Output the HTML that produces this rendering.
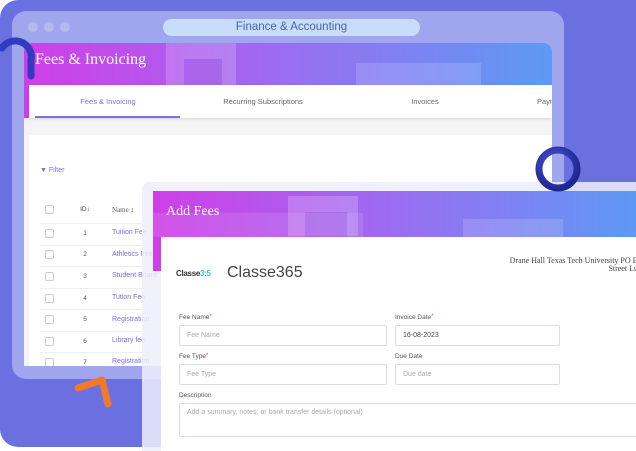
<!DOCTYPE html><html><head><style>
*{margin:0;padding:0;box-sizing:border-box}
html,body{width:636px;height:451px;overflow:hidden}
body{background:#fff;font-family:"Liberation Sans",sans-serif;position:relative}
.a{position:absolute}
.t{font-size:7.5px;color:#666}
.in{position:absolute;border:1px solid #dcdce4;border-radius:2px;background:#fff;font-size:7px;color:#aaa;padding:0 7px;display:flex;align-items:center}
.lbl{position:absolute;font-size:6.5px;color:#555}
.lbl b{color:#e33;font-weight:normal;font-size:6px;vertical-align:top}
.cb{position:absolute;left:45px;width:9px;height:9px;border:1px solid #ccc;border-radius:2px}
.row{position:absolute;left:40px;width:110px;border-top:1px solid #eee}
.id{position:absolute;left:80px;width:10px;text-align:center;font-size:6.5px;color:#555}
.nm{position:absolute;left:112px;font-size:7px;color:#7a6fe0;white-space:nowrap}
</style></head><body>
<div class="a" style="left:0;top:0;width:660px;height:447px;background:#6a70e0;border-radius:18px 0 0 18px"></div>
<div class="a" style="left:12px;top:11px;width:552px;height:368px;background:#a0a6ee;border-radius:14px"></div>
<div class="a" style="left:28px;top:22px;width:10px;height:10px;border-radius:50%;background:#b4b8ec"></div>
<div class="a" style="left:44px;top:22px;width:10px;height:10px;border-radius:50%;background:#b4b8ec"></div>
<div class="a" style="left:60px;top:22px;width:10px;height:10px;border-radius:50%;background:#b4b8ec"></div>
<div class="a" style="left:163px;top:19px;width:257px;height:17px;border-radius:9px;background:#c9dcfb;font-size:11.5px;color:#45699c;text-align:center;line-height:17px">Finance &amp; Accounting</div>
<div class="a" style="left:24px;top:43px;width:528px;height:323px;background:#f4f4f6;border-radius:8px 8px 0 0;overflow:hidden">
 <div class="a" style="left:0;top:0;width:528px;height:75px;background:linear-gradient(90deg,#d03ee8,#9a6ef0 50%,#5c9af5)"></div>
 <div class="a" style="left:142px;top:0;width:70px;height:42px;background:rgba(255,255,255,.18)"></div>
 <div class="a" style="left:160px;top:16px;width:38px;height:26px;background:rgba(120,40,220,.25)"></div>
 <div class="a" style="left:332px;top:20px;width:125px;height:55px;background:rgba(255,255,255,.15)"></div>
 <div class="a" style="left:11px;top:8px;font-family:'Liberation Serif',serif;font-size:16px;color:#fff">Fees &amp; Invoicing</div>
 <div class="a" style="left:5px;top:42px;width:523px;height:33px;background:#fff;box-shadow:0 1px 3px rgba(0,0,0,.12)">
  <div class="a t" style="left:6px;top:12px;width:146px;text-align:center;color:#7b6fe0">Fees &amp; Invoicing</div>
  <div class="a" style="left:6px;top:31px;width:145px;height:2px;background:#7b6fe0"></div>
  <div class="a t" style="left:174px;top:12px;width:120px;text-align:center">Recurring Subscriptions</div>
  <div class="a t" style="left:366px;top:12px;width:60px;text-align:center">Invoices</div>
  <div class="a t" style="left:508px;top:12px">Paym</div>
 </div>
 <div class="a" style="left:5px;top:92px;width:523px;height:240px;background:#fff"></div>
</div>
<div class="a" style="left:40px;top:167px;font-size:7px;color:#7b6fe0">&#9660; Filter</div>
<div class="cb" style="top:205px"></div><div class="id" style="top:206px;color:#444">ID↕</div><div class="nm" style="top:206px;color:#555;font-family:'Liberation Serif',serif">Name ↕</div>
<div class="row" style="top:223px"></div><div class="cb" style="top:229px"></div><div class="id" style="top:230px">1</div><div class="nm" style="top:229px">Tuition Fee</div>
<div class="row" style="top:245px"></div><div class="cb" style="top:250px"></div><div class="id" style="top:251px">2</div><div class="nm" style="top:251px">Athletics Fee</div>
<div class="row" style="top:266px"></div><div class="cb" style="top:272px"></div><div class="id" style="top:273px">3</div><div class="nm" style="top:272px">Student Board</div>
<div class="row" style="top:288px"></div><div class="cb" style="top:294px"></div><div class="id" style="top:295px">4</div><div class="nm" style="top:294px">Tution Fee</div>
<div class="row" style="top:309px"></div><div class="cb" style="top:315px"></div><div class="id" style="top:316px">5</div><div class="nm" style="top:316px">Registration</div>
<div class="row" style="top:331px"></div><div class="cb" style="top:337px"></div><div class="id" style="top:338px">6</div><div class="nm" style="top:337px">Library fee</div>
<div class="row" style="top:352px"></div><div class="cb" style="top:358px"></div><div class="id" style="top:359px">7</div><div class="nm" style="top:358px">Registration</div>
<div class="a" style="left:24px;top:366px;width:125px;height:4px;background:#a0a6ee"></div>
<svg class="a" style="left:0;top:0" width="636" height="451">
 <path d="M2 48 A16 16 0 0 1 31 60 L31 76" fill="none" stroke="#2f3bc0" stroke-width="7" stroke-linecap="round"/>
 <path d="M78 388 L102 380 L108 404" fill="none" stroke="#f07a2a" stroke-width="7" stroke-linecap="round" stroke-linejoin="round"/>
</svg>
<div class="a" style="left:142px;top:182px;width:500px;height:280px;background:rgba(238,239,252,.85);border-radius:8px 0 0 0"></div>
<div class="a" style="left:153px;top:191px;width:490px;height:80px;background:linear-gradient(90deg,#d03ee8,#9a6ef0 50%,#5c9af5);overflow:hidden">
 <div class="a" style="left:135px;top:5px;width:70px;height:40px;background:rgba(255,255,255,.2)"></div>
 <div class="a" style="left:152px;top:21px;width:42px;height:25px;background:rgba(120,40,220,.25)"></div>
 <div class="a" style="left:0;top:22px;width:210px;height:24px;background:rgba(255,255,255,.1)"></div>
 <div class="a" style="left:310px;top:28px;width:100px;height:50px;background:rgba(255,255,255,.15)"></div>
 <div class="a" style="left:13px;top:13px;font-family:'Liberation Serif',serif;font-size:14px;color:#fff">Add Fees</div>
</div>
<div class="a" style="left:161px;top:237px;width:480px;height:220px;background:#fff"></div>
<div class="a" style="left:176px;top:269px;font-size:8px;font-weight:bold;color:#333;letter-spacing:-.3px">Classe<span style="color:#3cc0c8">3:5</span></div>
<div class="a" style="left:227px;top:264px;font-size:16px;color:#444">Classe365</div>
<div class="a" style="left:400px;top:257px;width:246px;text-align:right;font-family:'Liberation Serif',serif;font-size:8px;color:#444;line-height:8px;white-space:nowrap">Drane Hall Texas Tech University PO Box<br>Street Lub&nbsp;&nbsp;</div>
<div class="lbl" style="left:179px;top:314px">Fee Name<b>*</b></div>
<div class="in" style="left:179px;top:325px;width:208px;height:21px">Fee Name</div>
<div class="lbl" style="left:395px;top:314px">Invoice Date<b>*</b></div>
<div class="in" style="left:395px;top:325px;width:165px;height:21px;color:#444">16-08-2023</div>
<div class="lbl" style="left:179px;top:353px">Fee Type<b>*</b></div>
<div class="in" style="left:179px;top:364px;width:208px;height:21px">Fee Type</div>
<div class="lbl" style="left:395px;top:353px">Due Date</div>
<div class="in" style="left:395px;top:364px;width:165px;height:21px">Due date</div>
<div class="lbl" style="left:179px;top:392px">Description</div>
<div class="in" style="left:179px;top:403px;width:470px;height:34px;align-items:flex-start;padding-top:5px">Add a summary, notes, or bank transfer details (optional)</div>
<svg class="a" style="left:534px;top:146px" width="50" height="48"><defs><radialGradient id="g" cx=".4" cy=".35" r=".7"><stop offset="0" stop-color="#4a55d8"/><stop offset="1" stop-color="#1e2690"/></radialGradient></defs><ellipse cx="24" cy="23" rx="19" ry="19" fill="none" stroke="url(#g)" stroke-width="7"/></svg>
</body></html>
